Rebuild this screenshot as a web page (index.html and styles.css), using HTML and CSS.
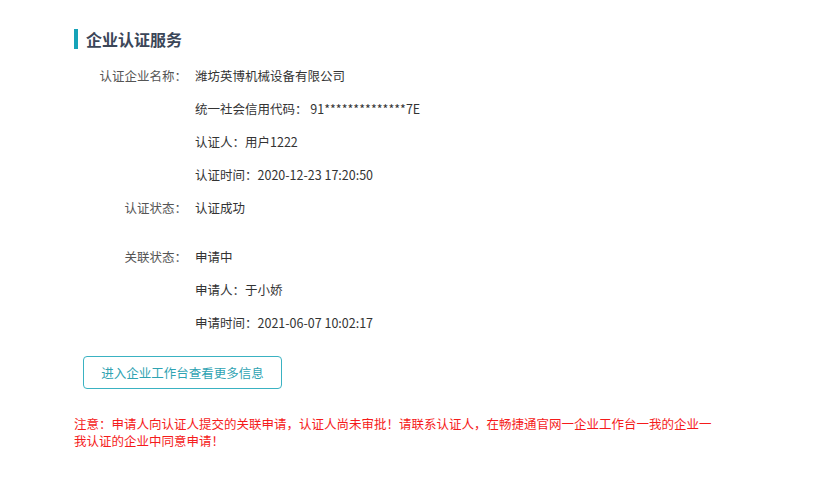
FILE: index.html
```html
<!DOCTYPE html>
<html lang="zh-CN">
<head>
<meta charset="utf-8">
<title>企业认证服务</title>
<link rel="stylesheet" href="styles.css">
</head>
<body>
<div class="page">
  <h2 class="title">企业认证服务</h2>
  <div class="info">
    <div class="row"><div class="label">认证企业名称：</div><div class="value">潍坊英博机械设备有限公司</div></div>
    <div class="row"><div class="label"></div><div class="value">统一社会信用代码：&nbsp;91**************7E</div></div>
    <div class="row"><div class="label"></div><div class="value">认证人：用户1222</div></div>
    <div class="row"><div class="label"></div><div class="value">认证时间：2020-12-23 17:20:50</div></div>
    <div class="row"><div class="label">认证状态：</div><div class="value">认证成功</div></div>
    <div class="row section"><div class="label">关联状态：</div><div class="value">申请中</div></div>
    <div class="row"><div class="label"></div><div class="value">申请人：于小娇</div></div>
    <div class="row"><div class="label"></div><div class="value">申请时间：2021-06-07 10:02:17</div></div>
  </div>
  <button class="btn" type="button">进入企业工作台查看更多信息</button>
  <p class="note">注意：申请人向认证人提交的关联申请，认证人尚未审批！请联系认证人，在畅捷通官网一企业工作台一我的企业一我认证的企业中同意申请！</p>
</div>
</body>
</html>
```
FILE: styles.css
```css
html, body {
  margin: 0;
  padding: 0;
  background: #fff;
}
body {
  font-family: "Noto Sans CJK SC", "Noto Sans", sans-serif;
  font-size: 12.5px;
  color: #333;
}
.page {
  padding: 29px 0 0 74px;
}
.title {
  margin: 0;
  display: flex;
  align-items: center;
  height: 20px;
  font-size: 16px;
  font-weight: bold;
  color: #3b4658;
  line-height: 20px;
}
.title::before {
  content: "";
  display: block;
  width: 4px;
  height: 20px;
  background: #16a3b8;
  margin-right: 8px;
}
.info {
  margin-top: 10px;
  display: flex;
  flex-direction: column;
}
.row {
  display: grid;
  grid-template-columns: 113px 1fr;
  column-gap: 8px;
  line-height: 33px;
  height: 33px;
}
.row.section {
  margin-top: 16px;
}
.label {
  text-align: right;
  color: #555;
  white-space: nowrap;
}
.value {
  color: #333;
  white-space: nowrap;
}
.btn {
  display: block;
  margin: 17px 0 0 9px;
  width: 199px;
  height: 33px;
  border: 1px solid #3ab2c2;
  border-radius: 4px;
  background: #fff;
  color: #2fa3b2;
  font-family: inherit;
  font-size: 12.5px;
  padding: 0;
}
.note {
  margin: 26px 0 0 0;
  width: 648px;
  color: #f51b1b;
  font-size: 12.5px;
  line-height: 17px;
}
```
